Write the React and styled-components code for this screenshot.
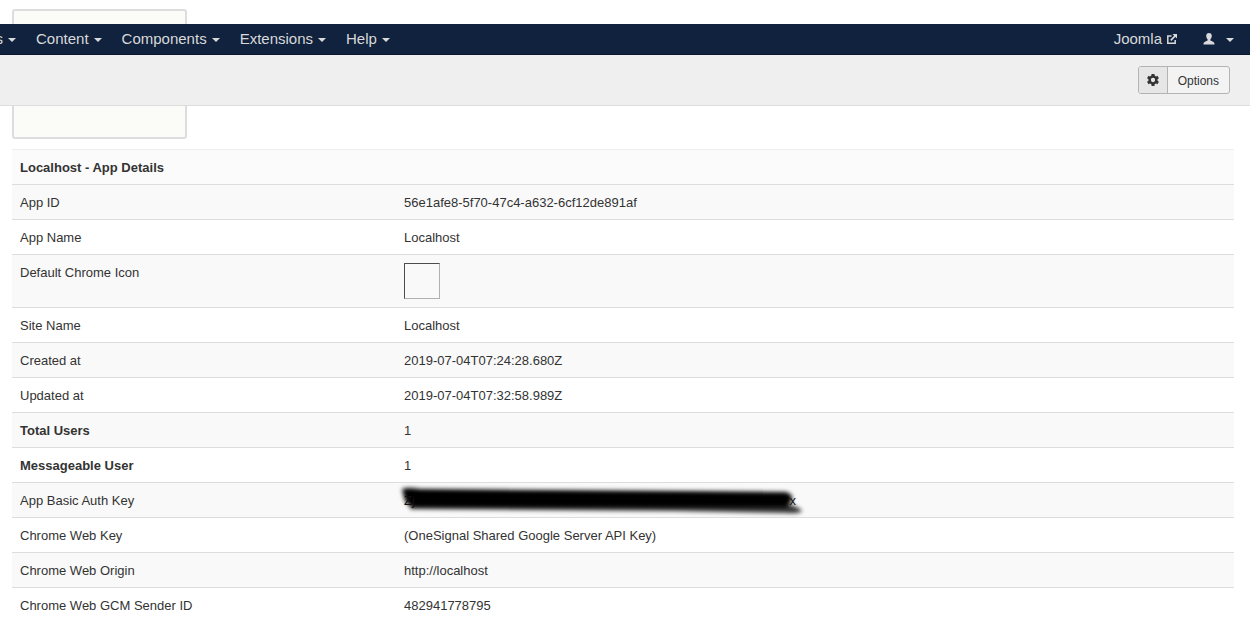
import styled, { createGlobalStyle } from "styled-components";

const GlobalStyle = createGlobalStyle`
  body {
    margin: 0;
    background: #fff;
    color: #333;
    font-family: "Liberation Sans", Arial, sans-serif;
    font-size: 13px;
    line-height: 20px;
    overflow: hidden;
  }
`;

const Page = styled.div`
  position: relative;
`;

const Header = styled.header`
  position: absolute;
  top: 24px;
  left: 0;
  right: 0;
  overflow: hidden;
`;

const Navbar = styled.nav`
  display: flex;
  justify-content: space-between;
  height: 30px;
  padding-right: 6px;
  background: #10223e;
  border-bottom: 1px solid #0a1730;
`;

const Menu = styled.ul`
  display: flex;
  list-style: none;
  padding: 0;
  margin: 0 0 0 ${(props) => (props.$scrolled ? "-52px" : "0")};
`;

const MenuLink = styled.a`
  display: flex;
  align-items: center;
  gap: 5px;
  height: 30px;
  padding: 0 10px;
  color: #d9d9d9;
  font-size: 15px;
  text-decoration: none;
  white-space: nowrap;
`;

const UserLink = styled(MenuLink)`
  gap: 11px;
  padding-left: 16px;
`;

const Caret = styled.span`
  width: 0;
  border: 4px solid transparent;
  border-top-color: #d9d9d9;
  border-bottom: 0;
  margin-top: 2px;
`;

const Subhead = styled.div`
  display: flex;
  justify-content: flex-end;
  padding: 11px 20px;
  background: #efefef;
  border-bottom: 1px solid #ddd;
`;

const OptionsButton = styled.button`
  display: flex;
  align-items: stretch;
  height: 28px;
  padding: 0;
  border: 1px solid #b3b3b3;
  border-radius: 3px;
  background: #f3f3f3;
  color: #333;
  font-family: inherit;
  font-size: 12px;
  line-height: 28px;
  overflow: hidden;
`;

const ButtonIcon = styled.span`
  display: flex;
  align-items: center;
  justify-content: center;
  width: 28px;
  background: #e6e6e6;
  border-right: 1px solid #b3b3b3;
`;

const ButtonLabel = styled.span`
  padding: 0 10px;
`;

const Main = styled.main`
  padding: 9px 16px 0 12px;
`;

const Panel = styled.div`
  box-sizing: border-box;
  width: 175px;
  height: 130px;
  border: 2px solid #ddd;
  border-radius: 3px;
  background: #fbfcf7;
`;

const Table = styled.table`
  width: 100%;
  margin-top: 10px;
  border-collapse: separate;
  border-spacing: 0;
`;

const TitleCell = styled.th`
  padding: 8px 8px 6px;
  border-top: 1px solid #eee;
  background: #fbfbfb;
  text-align: left;
`;

const Row = styled.tr`
  &:nth-child(odd) {
    background: #f9f9f9;
  }
`;

const Label = styled.th`
  box-sizing: border-box;
  width: 384px;
  padding: 8px 8px 6px;
  border-top: 1px solid #ddd;
  font-weight: ${(props) => (props.$strong ? "bold" : "normal")};
  text-align: left;
  vertical-align: top;
`;

const Value = styled.td`
  padding: 8px 8px 6px;
  border-top: 1px solid #ddd;
  vertical-align: top;
`;

const EmptyIcon = styled.div`
  box-sizing: border-box;
  width: 36px;
  height: 36px;
  margin-bottom: 2px;
  border: 1px solid;
  border-color: #4d4d4d #b0b0b0 #b0b0b0 #4d4d4d;
`;

const Hidden = styled.div`
  position: relative;
  display: flex;
  justify-content: space-between;
  width: 392px;
  color: #111;
`;

const Scribble = styled.svg`
  position: absolute;
  left: -8px;
  top: -8px;
`;

const KeyEdge = styled.span`
  position: relative;
`;

function ExternalIcon() {
  return (
    <svg width="10" height="10" viewBox="0 0 10 10" fill="none" stroke="#d9d9d9">
      <path d="M4.5 2H.8v7.3h7.4V6" strokeWidth="1.5" />
      <path d="M3.8 6.4 8.4 1.7" strokeWidth="1.7" />
      <path d="M5.4 0H10v4.6Z" fill="#d9d9d9" stroke="none" />
    </svg>
  );
}

function UserIcon() {
  return (
    <svg width="12" height="12" viewBox="0 0 12 12" fill="#d9d9d9">
      <path d="M6 0C4.2 0 3.200 1.100 3.200 2.800c0 1.500.5 2.700 1.400 3.500v1.200C3.200 8.100.5 8.900.5 10.700v.8h11v-.8c0-1.800-2.700-2.600-4.100-3.200V6.300c.9-.8 1.400-2 1.400-3.500C8.800 1.100 7.800 0 6 0Z" />
    </svg>
  );
}

function GearIcon() {
  return (
    <svg width="12" height="12" viewBox="0 0 12 12" fill="none" stroke="#333">
      <circle cx="6" cy="6" r="3.4" strokeWidth="2.500" />
      <path
        d="M6 0v2M6 10v2M.8 3l1.700 1M9.500 8l1.700 1M.8 9l1.700-1M9.500 4l1.700-1"
        strokeWidth="3"
      />
    </svg>
  );
}

function HiddenKey() {
  return (
    <Hidden>
      <Scribble width="412" height="36" viewBox="0 0 412 36" aria-hidden="true">
        <defs>
          <filter id="soft" x="-5%" y="-50%" width="110%" height="200%">
            <feGaussianBlur stdDeviation="2.2" />
          </filter>
        </defs>
        <g filter="url(#soft)" fill="#000">
          <path d="M6 6Q12 4 24 6L150 7 290 8 390 9Q399 12 395 19L390 24H18Q9 22 8 14Z" />
          <path d="M14 18 390 21Q402 23 406 28 403 31 390 30L280 28 14 26Z" opacity=".8" />
        </g>
      </Scribble>
      <KeyEdge>Zj</KeyEdge>
      <KeyEdge>x</KeyEdge>
    </Hidden>
  );
}

const menus = ["Menus", "Content", "Components", "Extensions", "Help"];

const details = [
  { label: "App ID", value: "56e1afe8-5f70-47c4-a632-6cf12de891af" },
  { label: "App Name", value: "Localhost" },
  { label: "Default Chrome Icon", value: <EmptyIcon /> },
  { label: "Site Name", value: "Localhost" },
  { label: "Created at", value: "2019-07-04T07:24:28.680Z" },
  { label: "Updated at", value: "2019-07-04T07:32:58.989Z" },
  { label: "Total Users", value: "1", strong: true },
  { label: "Messageable User", value: "1", strong: true },
  { label: "App Basic Auth Key", value: <HiddenKey /> },
  { label: "Chrome Web Key", value: "(OneSignal Shared Google Server API Key)" },
  { label: "Chrome Web Origin", value: "http://localhost" },
  { label: "Chrome Web GCM Sender ID", value: "482941778795" },
];

export default function App() {
  return (
    <Page>
      <GlobalStyle />
      <Main>
        <Panel />
        <Table>
          <thead>
            <tr>
              <TitleCell colSpan={2}>Localhost - App Details</TitleCell>
            </tr>
          </thead>
          <tbody>
            {details.map(({ label, value, strong }) => (
              <Row key={label}>
                <Label scope="row" $strong={strong}>
                  {label}
                </Label>
                <Value>{value}</Value>
              </Row>
            ))}
          </tbody>
        </Table>
      </Main>
      <Header>
        <Navbar>
          <Menu $scrolled>
            {menus.map((name) => (
              <li key={name}>
                <MenuLink href="#">
                  {name}
                  <Caret />
                </MenuLink>
              </li>
            ))}
          </Menu>
          <Menu>
            <li>
              <MenuLink href="#">
                Joomla
                <ExternalIcon />
              </MenuLink>
            </li>
            <li>
              <UserLink href="#" aria-label="User menu">
                <UserIcon />
                <Caret />
              </UserLink>
            </li>
          </Menu>
        </Navbar>
        <Subhead>
          <OptionsButton type="button">
            <ButtonIcon>
              <GearIcon />
            </ButtonIcon>
            <ButtonLabel>Options</ButtonLabel>
          </OptionsButton>
        </Subhead>
      </Header>
    </Page>
  );
}
